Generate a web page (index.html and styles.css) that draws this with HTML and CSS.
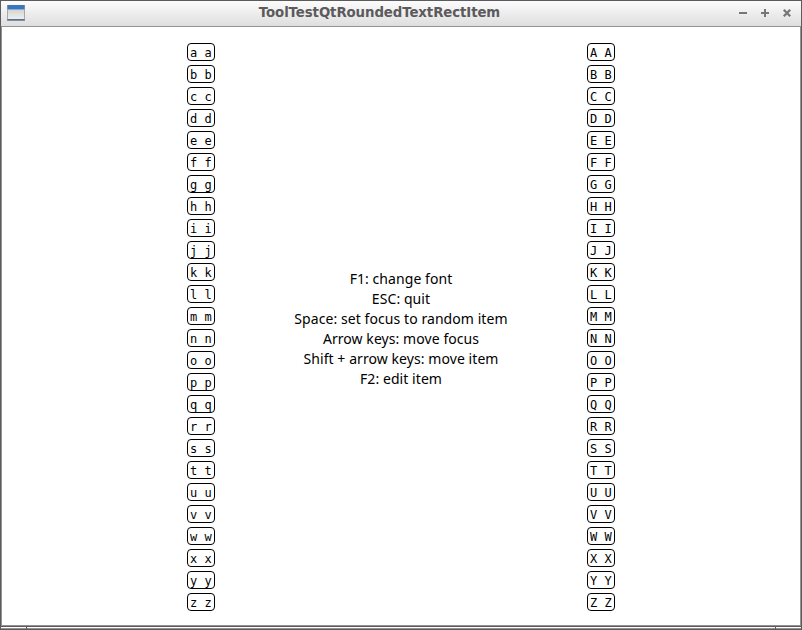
FILE: index.html
```html
<!DOCTYPE html>
<html lang="en">
<head>
<meta charset="utf-8">
<title>ToolTestQtRoundedTextRectItem</title>
<link rel="stylesheet" href="styles.css">
</head>
<body>
<div class="window">
  <header class="titlebar">
    <svg class="app-icon" width="18" height="17" viewBox="0 0 18 17">
      <defs><linearGradient id="pane" x2="0" y2="1"><stop offset="0" stop-color="#d5d5d2"/><stop offset="1" stop-color="#eeeeec"/></linearGradient></defs>
      <rect width="18" height="16" fill="#a6a8a5"/>
      <rect x="1" y="5" width="16" height="9" fill="url(#pane)"/>
      <rect x=".5" width="17" height="4" fill="#3f74b8"/>
      <rect x=".5" y="4" width="17" height="1" fill="#82aee0"/>
      <rect x=".5" y="14" width="17" height="1" fill="#4a74ac"/>
      <rect y="15" width="18" height="1" fill="#8b8d8e"/>
    </svg>
    <h1 class="title">ToolTestQtRoundedTextRectItem</h1>
    <svg class="controls" width="54" height="9" viewBox="0 0 54 9" fill="#777">
      <rect x="0" y="4" width="8" height="2"/>
      <rect x="22" y="4" width="8" height="2"/><rect x="25" y="1" width="2" height="8"/>
      <path d="M44.8 1.8 L51.2 8.2 M51.2 1.8 L44.8 8.2" stroke="#777" stroke-width="2.3"/>
    </svg>
  </header>
  <main class="scene">
    <div class="items" id="lower"></div>
    <div class="help">
      <p>F1: change font</p>
      <p>ESC: quit</p>
      <p>Space: set focus to random item</p>
      <p>Arrow keys: move focus</p>
      <p>Shift + arrow keys: move item</p>
      <p>F2: edit item</p>
    </div>
    <div class="items" id="upper"></div>
  </main>
  <footer class="resize"><i class="grip"></i><i class="edge"></i><i class="grip"></i></footer>
</div>
<script src="items.js"></script>
</body>
</html>
```
FILE: styles.css
```css
* { box-sizing: border-box; }
body { margin: 0; overflow: hidden; }
.window { width: 802px; height: 630px; display: flex; flex-direction: column; border: 1px solid #5c5a5c; background: #fff; }
.titlebar { height: 26px; flex: none; display: flex; align-items: flex-start; padding: 0 8px 0 6px; border-bottom: 1px solid #929292; background: linear-gradient(#fcfcfc, #dedede); }
.app-icon { margin-top: 4px; }
.title { flex: 1; margin: 0; text-align: center; padding-right: 5px; font: bold 13.33px/24px "DejaVu Sans", sans-serif; letter-spacing: -.1px; color: #5c5a5c; }
.controls { margin-top: 7px; }
.scene { height: 599px; flex: none; display: flex; align-items: flex-start; padding: 16px 185px 0; border: solid #929292; border-width: 0 1px 1px; }
.items { width: 28px; display: grid; gap: 4px; }
.item { width: 28px; height: 18px; border: 1px solid #000; border-radius: 4px; padding-left: 2px; font: 12px/18px "DejaVu Sans Mono", monospace; white-space: pre; color: #000; }
.help { flex: 1; padding: 226px 0 0 0; text-align: center; font: 14px/20px "Noto Sans", sans-serif; letter-spacing: .07px; color: #000; }
.help p { margin: 0; white-space: nowrap; }
.resize { height: 3px; flex: none; display: grid; grid-template-columns: 25px 748px 25px; gap: 1px; border-top: 1px solid #5c5a5c; background: #5c5a5c; }
.grip, .edge { border-bottom: 1px solid #929292; background: #fff; }
```
FILE: items.js
```js
const fill = (id, first) => {
  const column = document.getElementById(id);
  for (let i = 0; i < 26; i++) {
    const letter = String.fromCharCode(first.charCodeAt(0) + i);
    const item = document.createElement("div");
    item.className = "item";
    item.textContent = letter + " " + letter;
    column.append(item);
  }
};
fill("lower", "a");
fill("upper", "A");
```
